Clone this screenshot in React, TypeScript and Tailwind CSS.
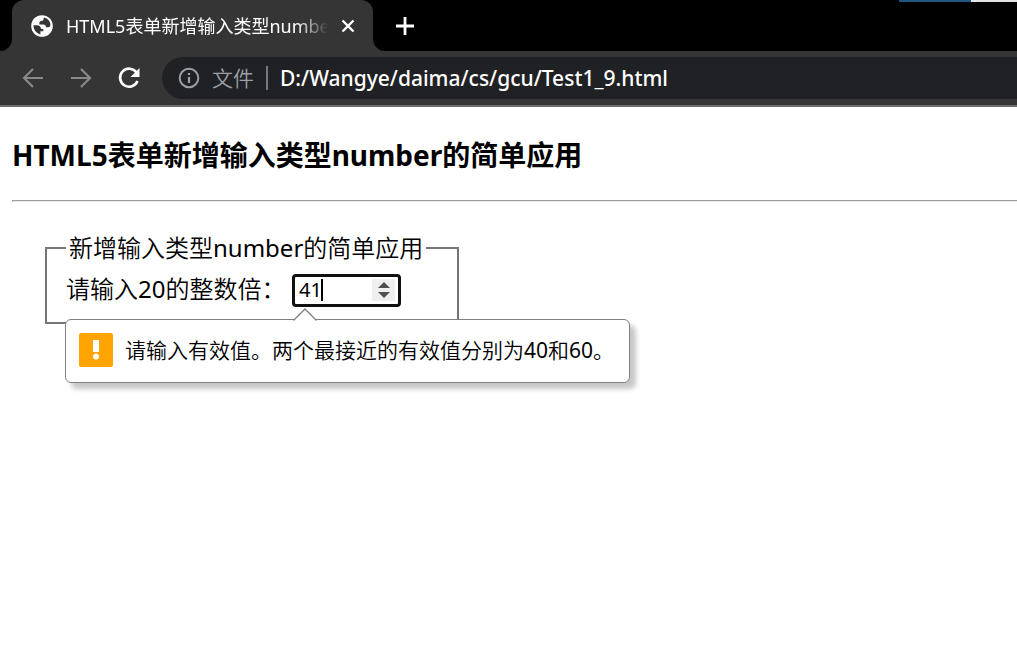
import { useState } from 'react';

function GlobeIcon() {
  return (
    <svg className="size-6 shrink-0" viewBox="0 0 24 24" aria-hidden="true">
      <circle cx="12" cy="12" r="10.800" fill="#fff" />
      <path
        d="M14.500 3.600c-.8.4-1 .9-1 1.700 0 1.300-.8 1.700-2.300 1.700-1.300 0-1.800.8-1.800 2.100v1.500h4c1.700 0 2.600 1 2.600 2.600h2.200c1.200 0 1.900-.6 2.200-1.600a8.400 8.400 0 0 0-5.900-8z"
        fill="#353535"
      />
      <path
        d="M3.500 11.200h3.700c2 0 3.900 1.700 3.900 3.900h2.200v2.100h-2.900v3.200A8.600 8.600 0 0 1 3.500 11.200z"
        fill="#353535"
      />
    </svg>
  );
}

function Tab() {
  return (
    <div className="relative flex h-full w-[361px] items-center rounded-t-xl bg-[#353535] pl-[18px] pr-[13px]">
      <svg className="absolute -left-3 bottom-0 size-3" viewBox="0 0 12 12" aria-hidden="true">
        <path d="M12 0v12H0A12 12 0 0 0 12 0z" fill="#353535" />
      </svg>
      <svg className="absolute -right-3 bottom-0 size-3" viewBox="0 0 12 12" aria-hidden="true">
        <path d="M0 0v12h12A12 12 0 0 1 0 0z" fill="#353535" />
      </svg>
      <GlobeIcon />
      <span className="ml-3 flex-1 overflow-hidden whitespace-nowrap mask-r-from-88% mask-r-to-100% text-[18px] leading-6 text-white">
        HTML5表单新增输入类型number的简单应用
      </span>
      <button type="button" aria-label="关闭" className="ml-2 flex size-6 items-center justify-center">
        <svg className="size-4" viewBox="0 0 16 16" aria-hidden="true">
          <path d="M2.500 2.500l11 11M13.500 2.500l-11 11" stroke="#fff" strokeWidth="2.400" />
        </svg>
      </button>
    </div>
  );
}

function TabStrip() {
  return (
    <div className="relative flex h-[51px] items-center bg-black pl-3">
      <Tab />
      <button type="button" aria-label="打开新的标签页" className="ml-5 flex size-6 items-center justify-center">
        <svg className="size-5" viewBox="0 0 20 20" aria-hidden="true">
          <path d="M10 1v18M1 10h18" stroke="#fff" strokeWidth="2.800" />
        </svg>
      </button>
      <div className="absolute right-0 top-0 flex h-0.5">
        <div className="w-[72px] bg-[#225682]" />
        <div className="w-[46px] bg-[#e4e4e4]" />
      </div>
    </div>
  );
}

function Toolbar() {
  return (
    <div className="flex h-14 items-center border-b-2 border-[#6b6b6b] bg-[#353535] pl-[21px]">
      <button type="button" aria-label="后退" className="flex size-6 items-center justify-center">
        <svg className="size-6" viewBox="0 0 24 24" fill="none" stroke="#898989" strokeWidth="2.200" aria-hidden="true">
          <path d="M22 12H3M12 3l-9 9 9 9" />
        </svg>
      </button>
      <button type="button" aria-label="前进" className="ml-6 flex size-6 items-center justify-center">
        <svg className="size-6" viewBox="0 0 24 24" fill="none" stroke="#898989" strokeWidth="2.200" aria-hidden="true">
          <path d="M2 12h19M12 3l9 9-9 9" />
        </svg>
      </button>
      <button type="button" aria-label="重新加载" className="ml-6 flex size-6 items-center justify-center">
        <svg className="size-6" viewBox="0 0 24 24" aria-hidden="true">
          <path d="M19.500 6.500A9 9 0 1 0 20.500 15" fill="none" stroke="#fff" strokeWidth="2.600" />
          <path d="M22.500 2v9h-9z" fill="#fff" />
        </svg>
      </button>
      <div className="ml-[21px] flex h-[42px] flex-1 items-center rounded-l-full bg-[#202124] pl-4">
        <svg className="size-[22px] shrink-0" viewBox="0 0 22 22" fill="none" stroke="#9aa0a6" strokeWidth="2" aria-hidden="true">
          <circle cx="11" cy="11" r="9.300" />
          <path d="M11 10v6M11 6v2" strokeWidth="2.200" />
        </svg>
        <span className="ml-3 text-[21px] leading-7 font-[350] text-[#9aa0a6]">文件</span>
        <span className="ml-3 h-6 w-0.5 bg-[#77797c]" />
        <input
          aria-label="地址栏"
          defaultValue="D:/Wangye/daima/cs/gcu/Test1_9.html"
          className="ml-3 min-w-0 flex-1 bg-transparent text-[21px] leading-7 font-medium text-white outline-none"
        />
      </div>
    </div>
  );
}

function ValidationBubble() {
  return (
    <div
      role="alert"
      className="absolute left-[-1px] top-full mt-3 flex h-16 items-center rounded-md border border-[#808080] bg-white pb-0.5 pl-[13px] pr-[15px] shadow-[6px_6px_5px_rgba(0,0,0,0.22)]"
    >
      <svg className="absolute -top-3 left-[227px] h-[13px] w-6" viewBox="0 0 24 13" aria-hidden="true">
        <path d="M0.500 13L12 1l11.500 12z" fill="#fff" />
        <path d="M0.500 12.500L12 1l11.500 11.500" fill="none" stroke="#808080" strokeWidth="1.300" />
      </svg>
      <svg className="size-[34px] shrink-0" viewBox="0 0 34 34" aria-hidden="true">
        <rect width="34" height="34" rx="2" fill="#ffa400" />
        <rect x="14" y="7" width="6" height="12" fill="#fff" />
        <circle cx="17" cy="23.500" r="3" fill="#fff" />
      </svg>
      <span className="ml-3 whitespace-nowrap text-[21px] leading-7 font-[350] text-black">
        请输入有效值。两个最接近的有效值分别为<span className="font-normal">40</span>和
        <span className="font-normal">60</span>。
      </span>
    </div>
  );
}

function NumberField() {
  const [value, setValue] = useState(41);
  return (
    <div className="relative flex w-max items-center">
      <label htmlFor="multiple" className="w-[226px] whitespace-nowrap pb-0.5 text-[24px] leading-8 font-[350]">
        请输入<span className="font-normal">20</span>的整数倍：
      </label>
      <div className="relative flex h-[33px] w-[109px] items-center rounded-[4px] border-[3px] border-[#101010] bg-white pl-1 pr-[3px]">
        <input
          id="multiple"
          type="number"
          min={0}
          step={20}
          value={value}
          onChange={(e) => setValue(Number(e.target.value))}
          className="min-w-0 flex-1 appearance-none bg-transparent text-[20px] leading-6 caret-transparent outline-none [-moz-appearance:textfield] [&::-webkit-inner-spin-button]:appearance-none"
        />
        <span className="absolute left-[26px] top-0.5 h-[22px] w-0.5 bg-black" />
        <div className="flex h-[22px] w-[23px] flex-col bg-[#efefef]">
          <button type="button" aria-label="增加" onClick={() => setValue(value + 20)} className="flex flex-1 items-end justify-center pb-0.5">
            <svg className="h-1.5 w-3" viewBox="0 0 12 6" aria-hidden="true">
              <path d="M0 6l6-6 6 6z" fill="#505050" />
            </svg>
          </button>
          <button type="button" aria-label="减少" onClick={() => setValue(value - 20)} className="flex flex-1 items-start justify-center pt-0.5">
            <svg className="h-1.5 w-3" viewBox="0 0 12 6" aria-hidden="true">
              <path d="M0 0l6 6 6-6z" fill="#505050" />
            </svg>
          </button>
        </div>
      </div>
      <ValidationBubble />
    </div>
  );
}

export default function App() {
  return (
    <div className="min-h-screen overflow-x-hidden bg-white font-['Noto_Sans','Noto_Sans_CJK_SC',sans-serif] text-black">
      <header>
        <TabStrip />
        <Toolbar />
      </header>
      <main className="pl-3 pt-7">
        <h1 className="whitespace-nowrap text-[28px] leading-10 font-bold">HTML5表单新增输入类型number的简单应用</h1>
        <hr className="mt-[25px] h-0.5 border-t border-b border-l border-t-[#9a9a9a] border-b-[#eeeeee] border-l-[#9a9a9a]" />
        <form className="pl-[33px] pt-[30px]">
          <fieldset className="w-[414px] border-2 border-[#767676] pb-[15px] pl-[19px]">
            <legend className="whitespace-nowrap px-[3px] text-[24px] leading-8 font-[350]">
              新增输入类型<span className="font-normal">number</span>的简单应用
            </legend>
            <div className="pt-[9px]">
              <NumberField />
            </div>
          </fieldset>
        </form>
      </main>
    </div>
  );
}
